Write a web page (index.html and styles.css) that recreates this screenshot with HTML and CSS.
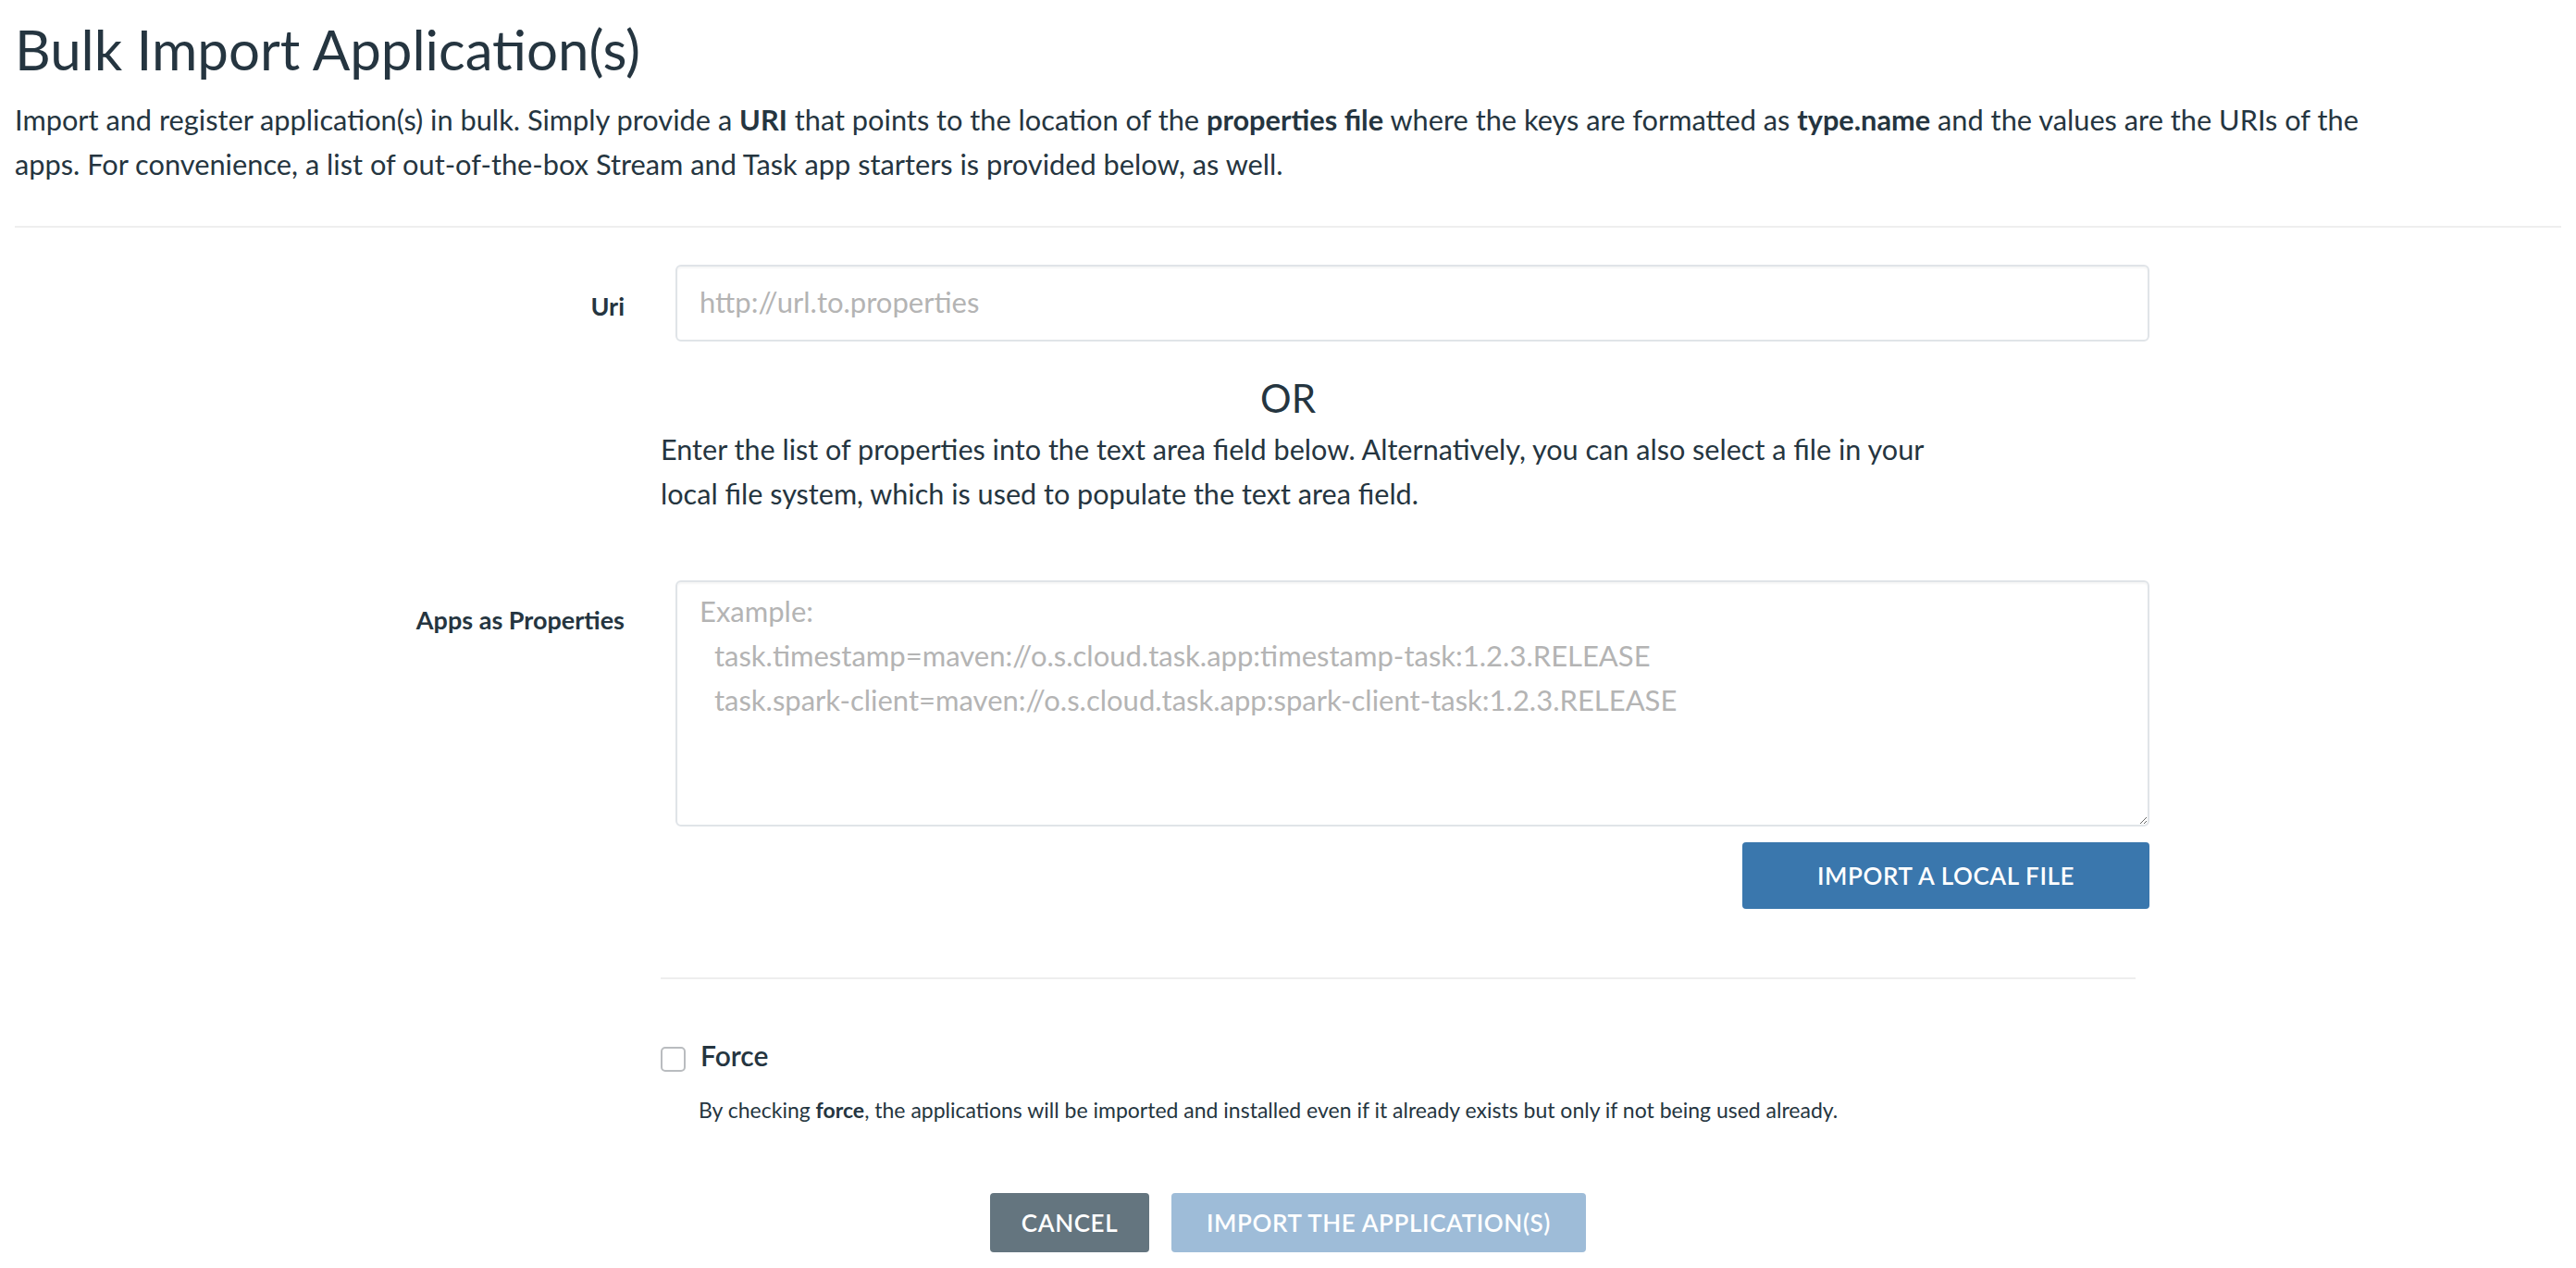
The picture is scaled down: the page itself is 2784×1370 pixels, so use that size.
FILE: index.html
```html
<!DOCTYPE html>
<html lang="en">
<head>
<meta charset="utf-8">
<title>Bulk Import Application(s)</title>
<link rel="stylesheet" href="styles.css">
</head>
<body>
<div class="page">
  <h1 class="title">Bulk Import Application(s)</h1>
  <p class="intro">Import and register application(s) in bulk. Simply provide a <strong>URI</strong> that points to the location of the <strong>properties file</strong> where the keys are formatted as <strong>type.name</strong> and the values are the URIs of the apps. For convenience, a list of out-of-the-box Stream and Task app starters is provided below, as well.</p>
  <hr class="divider">
  <form class="form">
    <div class="row row-uri">
      <label class="label">Uri</label>
      <input class="field" type="text" placeholder="http://url.to.properties">
    </div>
    <div class="or-block">
      <div class="or">OR</div>
      <p class="or-text">Enter the list of properties into the text area field below. Alternatively, you can also select a file in your local file system, which is used to populate the text area field.</p>
    </div>
    <div class="row row-props">
      <label class="label label-props">Apps as Properties</label>
      <div class="field-col">
        <textarea class="area" placeholder="Example:&#10;  task.timestamp=maven://o.s.cloud.task.app:timestamp-task:1.2.3.RELEASE&#10;  task.spark-client=maven://o.s.cloud.task.app:spark-client-task:1.2.3.RELEASE"></textarea>
        <div class="area-actions">
          <button type="button" class="btn btn-primary btn-file">Import a local file</button>
        </div>
      </div>
    </div>
    <div class="options">
      <hr class="divider-sm">
      <label class="check"><input type="checkbox" class="check-box"><span class="check-text">Force</span></label>
      <p class="help">By checking <strong>force</strong>, the applications will be imported and installed even if it already exists but only if not being used already.</p>
    </div>
    <div class="footer">
      <button type="button" class="btn btn-secondary">Cancel</button>
      <button type="button" class="btn btn-disabled" disabled>Import the application(s)</button>
    </div>
  </form>
</div>
</body>
</html>
```

FILE: styles.css
```css
html, body {
  margin: 0;
  padding: 0;
  background: #ffffff;
}

body {
  font-family: "Lato", "Liberation Sans", sans-serif;
  color: #253540;
  font-size: 30.6px;
  line-height: 48px;
}

.page {
  padding: 0 16px;
}

.title {
  margin: 17px 0 0;
  font-size: 60px;
  line-height: 72px;
  font-weight: 400;
  color: #253540;
}

.intro {
  margin: 17px 0 0;
  max-width: 2560px;
  font-size: 30.75px;
  line-height: 48px;
}

.intro strong {
  font-weight: 700;
}

.divider {
  margin: 42px 0 0;
  border: 0;
  border-top: 2px solid #eeeeee;
  height: 0;
}

.form {
  display: flex;
  flex-direction: column;
}

.row {
  display: flex;
  align-items: flex-start;
}

.row-uri {
  margin-top: 40px;
}

.label {
  width: 659px;
  margin-right: 55px;
  text-align: right;
  font-size: 27px;
  line-height: 36px;
  font-weight: 700;
  color: #253540;
  flex: none;
}

.row-uri .label {
  padding-top: 27px;
}

.label-props {
  padding-top: 25px;
}

.field {
  box-sizing: border-box;
  width: 1593px;
  height: 83px;
  margin: 0;
  padding: 0 24px 4px;
  border: 2px solid #e0e4e8;
  border-radius: 6px;
  box-shadow: inset 0 2px 2px rgba(0, 0, 0, 0.04);
  font-family: "Lato", "Liberation Sans", sans-serif;
  font-size: 31px;
  color: #253540;
  outline: none;
}

.field::placeholder,
.area::placeholder {
  color: #b4b4b4;
  opacity: 1;
}

.or-block {
  margin-top: 35px;
}

.or {
  text-align: center;
  font-size: 42px;
  line-height: 52px;
  color: #253540;
}

.or-text {
  margin: 6px 0 0 698px;
  max-width: 1400px;
  font-size: 30.6px;
  line-height: 48px;
}

.row-props {
  margin-top: 69px;
}

.field-col {
  display: flex;
  flex-direction: column;
  width: 1593px;
}

.area {
  box-sizing: border-box;
  display: block;
  width: 1593px;
  height: 266px;
  margin: 0;
  padding: 7px 24px;
  border: 2px solid #e0e4e8;
  border-radius: 6px;
  box-shadow: inset 0 2px 2px rgba(0, 0, 0, 0.04);
  font-family: "Lato", "Liberation Sans", sans-serif;
  font-size: 31px;
  line-height: 48px;
  color: #253540;
  outline: none;
}

.area-actions {
  display: flex;
  justify-content: flex-end;
  margin-top: 17px;
}

.btn {
  box-sizing: border-box;
  height: 64px;
  padding: 0;
  border: 0;
  border-radius: 4px;
  font-family: "Lato", "Liberation Sans", sans-serif;
  font-size: 26px;
  font-weight: 600;
  letter-spacing: 0.6px;
  text-transform: uppercase;
  white-space: nowrap;
  text-align: center;
  color: #ffffff;
  cursor: pointer;
}

.btn-primary {
  background: #3a77ad;
}

.btn-file {
  width: 440px;
  height: 72px;
}

.btn-secondary {
  background: #64757f;
  width: 172px;
}

.btn-disabled {
  background: #9ebcd8;
  width: 448px;
  cursor: default;
}

.options {
  margin-left: 698px;
  width: 1594px;
}

.divider-sm {
  margin: 74px 0 0;
  border: 0;
  border-top: 2px solid #eeeeee;
  height: 0;
}

.check {
  display: flex;
  align-items: flex-start;
  margin-top: 64px;
}

.check-box {
  -webkit-appearance: none;
  appearance: none;
  box-sizing: border-box;
  width: 27px;
  height: 27px;
  margin: 9px 16px 0 0;
  border: 2px solid #b9bcbf;
  border-radius: 5px;
  background: #ffffff;
  flex: none;
}

.check-text {
  font-size: 30px;
  line-height: 36px;
  font-weight: 600;
  color: #253540;
}

.help {
  margin: 24px 0 0 41px;
  font-size: 23px;
  line-height: 34px;
  color: #253540;
}

.help strong {
  font-weight: 700;
}

.footer {
  display: flex;
  justify-content: center;
  gap: 24px;
  margin-top: 73px;
}
```
